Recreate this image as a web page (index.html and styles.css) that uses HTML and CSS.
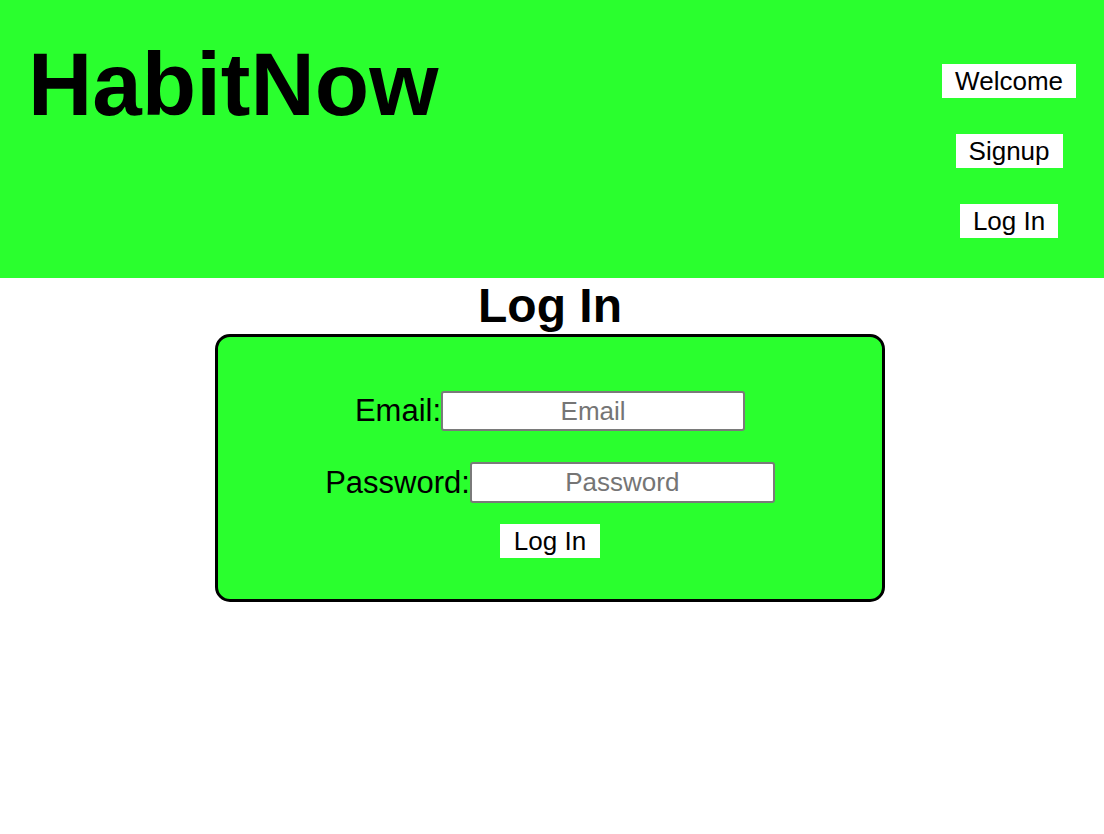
FILE: index.html
```html
<!DOCTYPE html>
<html lang="en">
<head>
<meta charset="utf-8">
<title>HabitNow - Log In</title>
<link rel="stylesheet" href="styles.css">
</head>
<body>
<header class="site-header">
  <h1 class="brand">HabitNow</h1>
  <nav class="nav">
    <a class="nav-link" href="#">Welcome</a>
    <a class="nav-link" href="#">Signup</a>
    <a class="nav-link" href="#">Log In</a>
  </nav>
</header>
<main class="main">
  <h2 class="page-title">Log In</h2>
  <form class="login-box">
    <div class="field field-email">
      <label class="field-label" for="email">Email:</label>
      <input class="field-input" id="email" type="email" placeholder="Email">
    </div>
    <div class="field field-password">
      <label class="field-label" for="password">Password:</label>
      <input class="field-input" id="password" type="password" placeholder="Password">
    </div>
    <button class="submit" type="button">Log In</button>
  </form>
</main>
</body>
</html>
```

FILE: styles.css
```css
html, body {
  margin: 0;
  padding: 0;
  background: #ffffff;
}

body {
  font-family: "Liberation Sans", Arial, Helvetica, sans-serif;
  color: #000000;
}

.site-header {
  background: #2aff2e;
  height: 278px;
  box-sizing: border-box;
  padding: 33px 28px 0 28px;
  display: flex;
  justify-content: space-between;
  align-items: flex-start;
}

.brand {
  margin: 0;
  font-size: 89px;
  font-weight: bold;
  line-height: normal;
}

.nav {
  margin-top: 31px;
  display: flex;
  flex-direction: column;
  align-items: center;
  gap: 36px;
}

.nav-link {
  display: block;
  background: #ffffff;
  color: #000000;
  text-decoration: none;
  font-size: 26px;
  line-height: 30px;
  padding: 2px 13px;
}

.main {
  display: flex;
  flex-direction: column;
  align-items: center;
  padding-right: 4px;
}

.page-title {
  margin: 0;
  font-size: 48px;
  font-weight: bold;
  line-height: 56px;
}

.login-box {
  width: 670px;
  box-sizing: border-box;
  background: #2aff2e;
  border: 3px solid #000000;
  border-radius: 15px;
  padding: 54px 0 41px;
  display: flex;
  flex-direction: column;
  align-items: center;
}

.field {
  display: flex;
  align-items: center;
  justify-content: center;
}

.field-email {
  margin-bottom: 31px;
}

.field-password {
  margin-bottom: 21px;
}

.field-label {
  font-size: 31px;
  line-height: 40px;
}

.field-input {
  width: 304px;
  height: 40px;
  box-sizing: border-box;
  border: 2px solid #7a7a7a;
  border-radius: 3px;
  background: #ffffff;
  font-family: "Liberation Sans", Arial, Helvetica, sans-serif;
  font-size: 26px;
  text-align: center;
  padding: 0 4px;
  color: #000000;
}

.field-password .field-input {
  width: 305px;
  height: 41px;
}

.field-input::placeholder {
  color: #757575;
}

.submit {
  background: #ffffff;
  border: none;
  border-radius: 0;
  font-family: "Liberation Sans", Arial, Helvetica, sans-serif;
  font-size: 26px;
  line-height: 30px;
  padding: 2px 14px;
  color: #000000;
}
```
